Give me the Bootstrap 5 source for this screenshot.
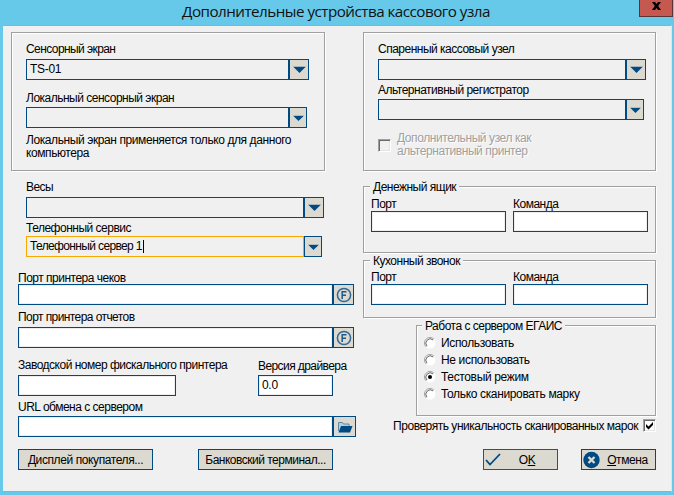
<!DOCTYPE html>
<html lang="ru">
<head>
<meta charset="utf-8">
<title>Дополнительные устройства кассового узла</title>
<link href="https://cdn.jsdelivr.net/npm/bootstrap@5.3.0/dist/css/bootstrap.min.css" rel="stylesheet">
<style>
:root{--navy:#004a84;--face:#f0f0f0;--btn:#dcd9d0}
body{margin:0;background:#66c9ea;color:#000;font:12px/13px "Liberation Sans",Arial,sans-serif;letter-spacing:-.5px;overflow:hidden}
.window-frame{width:674px;height:495px}
.title-bar{height:25px}
.title-text{font:15.2px/22px "Open Sans","Noto Sans",sans-serif;width:309px;margin-left:182px;color:#111;white-space:nowrap;letter-spacing:-.51px}
.close-btn{width:34px;height:17px;margin-left:148px;background:#c5584f;border:1px solid #5c3436;border-top:0;padding:2px 0 0}
.client{width:669px;height:467px;margin-left:3px;background:var(--face);border-top:1px solid #86b4c4;border-bottom:1px solid #86b4c4;border-right:1px solid #d9e6ea}
.col-left{width:360px;padding:6px 0 0 8px}
.col-right{width:293px;padding-top:6px}
.group-box{border:1px solid #a0a0a0;box-shadow:1px 1px #fff,inset 1px 1px #fff}
.g-screen{width:314px;height:139px;padding:9px 0 0 14px}
.g-pair{height:139px;padding:9px 0 0 14px}
.g-cash{height:67px;margin-top:15px;padding-left:7px}
.g-bell{height:58px;margin-top:7px;padding-left:7px}
.g-egais{height:91px;margin:7px 0 0 53px;padding-left:6px}
.legend-text{width:fit-content;height:14px;margin-top:-7px;margin-bottom:-1px;margin-left:-1px;padding:1px 3px 0;background:var(--face)}
.lbl{display:block;height:13px;padding-top:1px;white-space:nowrap}
.t1{margin-top:1px}.t2{margin-top:2px}.t3{margin-top:3px}.t4{margin-top:4px}.t5{margin-top:5px}.t6{margin-top:6px}.t9{margin-top:9px}.t10{margin-top:10px}.t11{margin-top:11px}.t12{margin-top:12px}.t14{margin-top:14px}.t17{margin-top:17px}
.tight{letter-spacing:-.58px}
.loose{letter-spacing:-.41px}
.indent{padding-left:15px}
.flush{padding-left:7px}
.form-control.box{height:21px;min-height:0;padding:0 3px 1px;border:1px solid var(--navy);border-radius:0;font:inherit;letter-spacing:-.3px;color:#000;background:#fff;box-shadow:inset 0 0 0 1px #eee}
.form-control.combo{background:var(--face);box-shadow:none}
.form-control.active-combo{border-color:#f9a800;letter-spacing:-.64px}
.caret{width:1px;height:13px;margin-left:1px;background:#000}
.side-btn{height:21px;padding:0;border:1px solid var(--navy);background:var(--btn);display:flex;align-items:center;justify-content:center;flex:none}
.w278{width:278px}.w263{width:263px}.w248{width:248px}.w315{width:315px}.w158{width:158px}.w135{width:135px}.w75{width:75px}
.b16{width:18px}.b17{width:19px}.b18{width:20px}.b20{width:21px}.b22{width:23px}
.btn.flat{height:21px;padding:2px 0 0;border:1px solid var(--navy);border-radius:0;background:var(--btn);color:#000;font:inherit;letter-spacing:-.4px;white-space:nowrap}
.btn.flat.action{padding:0}
.action span{padding-top:2px}
.btn.flat.ok{border-color:#008000}
.btn.flat.bank-btn{margin-left:45px;letter-spacing:-.5px;padding-top:1px}
.cancel-btn{margin-left:23px}
.driver-ver{margin-left:82px}
.driver-ver .lbl{padding-top:2px}
.tick-box{width:13px;height:13px;flex:none;border:1px solid;border-color:#a0a0a0 #fff #fff #a0a0a0;box-shadow:inset 1px 1px #696969,inset -1px -1px #e3e3e3}
.tick-box svg{display:block}
.disabled-text{color:#a0a0a0;text-shadow:1px 1px #fff;padding-left:6px;letter-spacing:-.42px}
.radio-row{height:17px;gap:5px;padding-left:1px;letter-spacing:-.35px}
.radio-row span{padding-top:1px}
.check-text{letter-spacing:-.47px;padding-right:1px}
svg{flex:none}
</style>
</head>
<body>
<svg class="d-none">
  <symbol id="arrow" viewBox="0 0 13 7"><path d="M0 .5h13" stroke="#a9b5bd"/><path d="M.5 1h12L6.500 7z" fill="#004a84"/></symbol>
  <symbol id="fmark" viewBox="0 0 16 16"><circle cx="8" cy="8" r="6.600" fill="none" stroke="#2f6795" stroke-width="1.500"/><path d="M6.200 12V4.700h4.300M6.200 8.200h3.800" fill="none" stroke="#1d5a8d" stroke-width="1.500"/></symbol>
  <symbol id="radio" viewBox="0 0 12 12"><circle cx="6" cy="6" r="5.500" fill="#fff"/><path d="M2.100 9.900A5.500 5.500 0 0 1 9.900 2.100" fill="none" stroke="#a0a0a0"/><path d="M2.900 9.100A4.400 4.400 0 0 1 9.100 2.900" fill="none" stroke="#696969"/></symbol>
</svg>
<div class="window-frame">
  <header class="title-bar d-flex align-items-start">
    <div class="title-text">Дополнительные устройства кассового узла</div>
    <button class="close-btn d-flex justify-content-center" aria-label="Закрыть"><svg width="9" height="8" viewBox="0 0 9 8"><path d="M0 0h3l1.500 2L6 0h3L6.200 4 9 8H6L4.500 6 3 8H0l2.800-4z" fill="#000"/></svg></button>
  </header>
  <main class="client d-flex">
    <section class="col-left">
      <div class="group-box g-screen">
        <label class="lbl tight">Сенсорный экран</label>
        <div class="d-flex t4"><input class="form-control box combo w263" value="TS-01"><button class="side-btn b18"><svg width="13" height="7"><use href="#arrow"/></svg></button></div>
        <label class="lbl t11">Локальный сенсорный экран</label>
        <div class="d-flex t3"><input class="form-control box combo w263"><button class="side-btn b16"><svg width="11" height="6"><use href="#arrow"/></svg></button></div>
        <div class="t6 loose text-nowrap">Локальный экран применяется только для данного<br>компьютера</div>
      </div>
      <div class="indent">
        <label class="lbl tight t9">Весы</label>
        <div class="d-flex t4"><input class="form-control box combo w278"><button class="side-btn b18"><svg width="13" height="7"><use href="#arrow"/></svg></button></div>
        <label class="lbl t3">Телефонный сервис</label>
        <div class="d-flex t2"><div class="form-control box combo active-combo w278 d-flex align-items-center">Телефонный сервер 1<span class="caret"></span></div><button class="side-btn b16"><svg width="11" height="6"><use href="#arrow"/></svg></button></div>
      </div>
      <div class="flush">
        <label class="lbl t14">Порт принтера чеков</label>
        <div class="d-flex"><input class="form-control box w315"><button class="side-btn b20"><svg width="16" height="16"><use href="#fmark"/></svg></button></div>
        <label class="lbl tight t5">Порт принтера отчетов</label>
        <div class="d-flex t4"><input class="form-control box w315"><button class="side-btn b20"><svg width="16" height="16"><use href="#fmark"/></svg></button></div>
        <div class="d-flex t10">
          <div class="w158"><label class="lbl">Заводской номер фискального принтера</label><input class="form-control box w158 t4"></div>
          <div class="driver-ver"><label class="lbl tight">Версия драйвера</label><input class="form-control box w75 t4" value="0.0"></div>
        </div>
        <label class="lbl t4">URL обмена с сервером</label>
        <div class="d-flex t3"><input class="form-control box w315"><button class="side-btn b22"><svg width="16" height="12" viewBox="0 0 16 12"><path d="M1.500 10V1.500h4l1 1.500H12v2" fill="#b9ccd8" stroke="#5c88a8"/><path d="M4 5h11.500L13 11.500H1.500z" fill="#004a84"/></svg></button></div>
        <div class="d-flex t12"><button class="btn flat w135">Дисплей покупателя...</button><button class="btn flat w135 bank-btn">Банковский терминал...</button></div>
      </div>
    </section>
    <section class="col-right">
      <div class="group-box g-pair">
        <label class="lbl">Спаренный кассовый узел</label>
        <div class="d-flex t4"><input class="form-control box combo w248"><button class="side-btn b18"><svg width="13" height="7"><use href="#arrow"/></svg></button></div>
        <label class="lbl t3">Альтернативный регистратор</label>
        <div class="d-flex t3"><input class="form-control box combo w248"><button class="side-btn b16"><svg width="11" height="6"><use href="#arrow"/></svg></button></div>
        <div class="d-flex align-items-center t12"><span class="tick-box"></span><div class="disabled-text text-nowrap">Дополнительный узел как<br>альтернативный принтер</div></div>
      </div>
      <div class="group-box g-cash">
        <div class="legend-text">Денежный ящик</div>
        <div class="d-flex t4">
          <div><label class="lbl">Порт</label><input class="form-control box w135 t1"></div>
          <div class="flush"><label class="lbl">Команда</label><input class="form-control box w135 t1"></div>
        </div>
      </div>
      <div class="group-box g-bell">
        <div class="legend-text">Кухонный звонок</div>
        <div class="d-flex t3">
          <div><label class="lbl">Порт</label><input class="form-control box w135 t1"></div>
          <div class="flush"><label class="lbl">Команда</label><input class="form-control box w135 t1"></div>
        </div>
      </div>
      <div class="group-box g-egais">
        <div class="legend-text">Работа с сервером ЕГАИС</div>
        <div class="t2">
          <div class="radio-row d-flex align-items-center"><svg width="12" height="12"><use href="#radio"/></svg><span>Использовать</span></div>
          <div class="radio-row d-flex align-items-center"><svg width="12" height="12"><use href="#radio"/></svg><span>Не использовать</span></div>
          <div class="radio-row d-flex align-items-center"><svg width="12" height="12"><use href="#radio"/><circle cx="6" cy="6" r="2" fill="#000"/></svg><span>Тестовый режим</span></div>
          <div class="radio-row d-flex align-items-center"><svg width="12" height="12"><use href="#radio"/></svg><span>Только сканировать марку</span></div>
        </div>
      </div>
      <div class="d-flex t3 justify-content-end"><span class="lbl check-text me-1">Проверять уникальность сканированных марок</span><span class="tick-box bg-white"><svg width="11" height="11" viewBox="0 0 11 11"><path d="M2 4v3l2.500 2.500L9 5V2L4.500 6.500z" fill="#000"/></svg></span></div>
      <div class="d-flex t17 justify-content-end">
        <button class="btn flat action ok w75 d-flex align-items-center"><svg width="17" height="13" viewBox="0 0 17 13"><path d="M2 7l4 4.500L16 1" fill="none" stroke="#004a84" stroke-width="1.800"/></svg><span class="mx-auto pe-1">O<u>K</u></span></button>
        <button class="btn flat action w75 d-flex align-items-center cancel-btn"><svg width="18" height="18" viewBox="0 0 18 18"><circle cx="9.500" cy="9" r="8.200" fill="#004a84"/><path d="M6.500 6l6 6M12.500 6l-6 6" stroke="#dcd9d0" stroke-width="2.400"/></svg><span class="mx-auto"><u>О</u>тмена</span></button>
      </div>
    </section>
  </main>
</div>
<script src="https://cdn.jsdelivr.net/npm/bootstrap@5.3.0/dist/js/bootstrap.bundle.min.js"></script>
</body>
</html>
